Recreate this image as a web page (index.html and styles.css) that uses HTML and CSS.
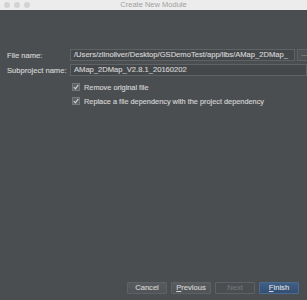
FILE: index.html
```html
<!DOCTYPE html>
<html>
<head>
<meta charset="utf-8">
<link rel="stylesheet" href="styles.css">
</head>
<body>
<div class="window">
  <div class="titlebar">
    <div class="lights"><span class="light"></span><span class="light"></span><span class="light"></span></div>
    <div class="title">Create New Module</div>
  </div>
  <div class="content">
    <div class="form">
      <label class="label">File name:</label>
      <div class="fieldrow">
        <div class="field">/Users/zlinoliver/Desktop/GSDemoTest/app/libs/AMap_2DMap_</div>
        <div class="browse">...</div>
      </div>
      <label class="label">Subproject name:</label>
      <div class="fieldrow">
        <div class="field wide">AMap_2DMap_V2.8.1_20160202</div>
      </div>
    </div>
    <div class="checks">
      <div class="check"><span class="box"><svg width="6" height="6" viewBox="0 0 6 6"><path d="M0.8 3.1 L2.4 4.8 L5.3 0.9" fill="none" stroke="#d4d4d4" stroke-width="1.1"/></svg></span><span>Remove original file</span></div>
      <div class="check"><span class="box"><svg width="6" height="6" viewBox="0 0 6 6"><path d="M0.8 3.1 L2.4 4.8 L5.3 0.9" fill="none" stroke="#d4d4d4" stroke-width="1.1"/></svg></span><span>Replace a file dependency with the project dependency</span></div>
    </div>
    <div class="buttons">
      <div class="btn">Cancel</div>
      <div class="btn"><u>P</u>revious</div>
      <div class="btn disabled">Next</div>
      <div class="btn primary"><u>F</u>inish</div>
    </div>
  </div>
</div>
</body>
</html>
```
FILE: styles.css
```css
html, body {
  margin: 0;
  padding: 0;
  width: 307px;
  height: 300px;
  overflow: hidden;
  background: #4b4e51;
}
.window {
  display: flex;
  flex-direction: column;
  height: 300px;
  font-family: "Liberation Sans", Arial, sans-serif;
  font-size: 7.6px;
  color: #d2d2d2;
  -webkit-text-stroke: 0.15px currentColor;
}
.titlebar {
  height: 10px;
  background: #ececec;
  position: relative;
  display: flex;
  align-items: center;
  justify-content: center;
}
.lights {
  position: absolute;
  left: 4px;
  top: 2px;
  display: flex;
  gap: 4px;
}
.light {
  width: 6px;
  height: 6px;
  border-radius: 50%;
  background: #d3d3d3;
}
.title {
  color: #a0a0a0;
  font-size: 7.5px;
  line-height: 10px;
  -webkit-text-stroke: 0;
}
.content {
  flex: 1;
  display: flex;
  flex-direction: column;
  padding: 39px 8px 6px 7px;
}
.form {
  display: grid;
  grid-template-columns: 63px 1fr;
  row-gap: 3px;
  align-items: center;
  margin-right: -8px;
}
.label {
  white-space: nowrap;
  color: #d2d2d2;
  font-size: 7.6px;
}
.fieldrow {
  display: flex;
  gap: 2px;
}
.field {
  flex: 1;
  min-width: 0;
  height: 10px;
  line-height: 10px;
  border: 1px solid #606366;
  background: #45484b;
  padding-left: 3px;
  color: #d2d2d2;
  white-space: nowrap;
  overflow: hidden;
  font-size: 7.6px;
}
.browse {
  width: 6px;
  height: 10px;
  border: 1px solid #606366;
  border-right: none;
  background: #505356;
  color: #aaa;
  line-height: 8px;
  padding-left: 3px;
  overflow: hidden;
}
.checks {
  display: flex;
  flex-direction: column;
  gap: 4px;
  margin-top: 6px;
  padding-left: 65px;
}
.check {
  display: flex;
  align-items: center;
  gap: 4px;
  height: 10px;
  color: #d2d2d2;
  font-size: 7.35px;
}
.box {
  width: 6px;
  height: 6px;
  border: 0.5px solid #75787b;
  background: #5e6164;
  display: flex;
  align-items: center;
  justify-content: center;
}
.buttons {
  margin-top: auto;
  display: flex;
  justify-content: flex-end;
  gap: 4px;
}
.btn {
  width: 38px;
  height: 10px;
  line-height: 10px;
  text-align: center;
  border: 1px solid #5f6265;
  border-radius: 1px;
  background: linear-gradient(#585b5e, #515457);
  color: #d0d0d0;
  font-size: 7.6px;
}
.btn u {
  text-decoration: underline;
}
.btn.disabled {
  background: transparent;
  color: #72757a;
}
.btn.primary {
  background: linear-gradient(#3f5f86, #344f73);
  border-color: #4a6a92;
  color: #dcdcdc;
}
```
